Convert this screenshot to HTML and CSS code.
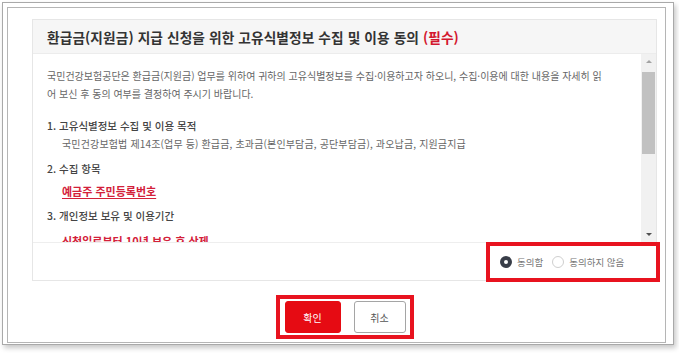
FILE: index.html
```html
<!DOCTYPE html>
<html lang="ko">
<head>
<meta charset="utf-8">
<link rel="stylesheet" href="styles.css">
</head>
<body>
<div class="outer">
  <div class="inner">
    <div class="panel">
      <div class="panel-head">
        <h2 class="title">환급금(지원금) 지급 신청을 위한 고유식별정보 수집 및 이용 동의 <span class="req">(필수)</span></h2>
      </div>
      <div class="scroll">
        <div class="scroll-text">
          <p class="intro">국민건강보험공단은 환급금(지원금) 업무를 위하여 귀하의 고유식별정보를 수집·이용하고자 하오니, 수집·이용에 대한 내용을 자세히 읽<br>어 보신 후 동의 여부를 결정하여 주시기 바랍니다.</p>
          <div class="sec sec1">1. 고유식별정보 수집 및 이용 목적</div>
          <div class="item">국민건강보험법 제14조(업무 등) 환급금, 초과금(본인부담금, 공단부담금), 과오납금, 지원금지급</div>
          <div class="sec sec2">2. 수집 항목</div>
          <div class="item red-item">예금주 주민등록번호</div>
          <div class="sec sec3">3. 개인정보 보유 및 이용기간</div>
          <div class="item red-item red-last">신청일로부터 10년 보유 후 삭제</div>
        </div>
        <div class="scrollbar">
          <div class="sb-btn"><span class="arrow-up"></span></div>
          <div class="sb-thumb"></div>
          <div class="sb-space"></div>
          <div class="sb-btn"><span class="arrow-down"></span></div>
        </div>
      </div>
      <div class="agree-row">
        <div class="agree-box">
          <label class="radio"><span class="dot checked"></span><span class="radio-label">동의함</span></label>
          <label class="radio"><span class="dot"></span><span class="radio-label">동의하지 않음</span></label>
        </div>
      </div>
    </div>
    <div class="btn-row">
      <div class="btn-box">
        <button class="btn btn-ok">확인</button>
        <button class="btn btn-cancel">취소</button>
      </div>
    </div>
  </div>
</div>
</body>
</html>
```

FILE: styles.css
```css
* { box-sizing: border-box; }
html, body { margin: 0; padding: 0; background: #ffffff; }
body {
  width: 679px;
  height: 356px;
  overflow: hidden;
  font-family: "Noto Sans CJK KR", "Noto Sans", sans-serif;
  color: #555;
}
.outer {
  margin: 2px 0 0 2px;
  width: 672px;
  height: 343px;
  border: 1px solid #a9a9a9;
  padding: 4px 7px 1px 4px;
  box-shadow: 2px 3px 5px rgba(0, 0, 0, 0.22);
  background: #fff;
}
.inner {
  height: 100%;
  border: 1px solid #b5b5b5;
  padding: 11px 8px 0 24px;
  display: flex;
  flex-direction: column;
}
.panel {
  border: 1px solid #e6e6e6;
  display: flex;
  flex-direction: column;
}
.panel-head {
  height: 34px;
  background: #f6f6f6;
  border-bottom: 1px solid #ececec;
  display: flex;
  align-items: center;
  padding-left: 14px;
}
.title {
  margin: 0;
  font-size: 13.7px;
  font-weight: 700;
  color: #333;
  letter-spacing: 0.1px;
}
.req { color: #d3182f; }
.scroll {
  height: 188px;
  display: flex;
}
.scroll-text {
  flex: 1;
  overflow: hidden;
  padding: 13px 10px 0 14px;
  font-size: 10px;
  line-height: 18px;
  color: #666;
}
.intro { margin: 0; }
.sec {
  color: #444;
  font-weight: 500;
  font-size: 10.5px;
}
.sec1 { margin-top: 14px; }
.sec2 { margin-top: 7px; }
.sec3 { margin-top: 7px; }
.item { padding-left: 15px; letter-spacing: 0.15px; }
.red-item {
  margin-top: 4px;
  color: #d3203a;
  font-weight: 700;
  font-size: 11px;
  letter-spacing: 0;
  text-decoration: underline;
  text-underline-offset: 2px;
}
.red-last { margin-top: 7px; text-decoration: none; }
.scrollbar {
  width: 15px;
  background: #f1f1f1;
  display: flex;
  flex-direction: column;
}
.sb-btn {
  height: 15px;
  display: flex;
  align-items: center;
  justify-content: center;
}
.arrow-up {
  width: 0; height: 0;
  border-left: 3px solid transparent;
  border-right: 3px solid transparent;
  border-bottom: 3px solid #a3a3a3;
}
.arrow-down {
  width: 0; height: 0;
  border-left: 3px solid transparent;
  border-right: 3px solid transparent;
  border-top: 3px solid #505050;
}
.sb-thumb {
  margin: 3px 1px 0 1px;
  height: 82px;
  background: #c1c1c1;
}
.sb-space { flex: 1; }
.agree-row {
  height: 38px;
  border-top: 1px solid #eeeeee;
  display: flex;
  justify-content: flex-end;
  align-items: center;
}
.agree-box {
  margin: -1px -4px -2px 0;
  width: 174px;
  height: 40px;
  border: 4px solid #e8131f;
  display: flex;
  align-items: center;
  padding-left: 10px;
  gap: 9px;
}
.radio {
  display: flex;
  align-items: center;
  gap: 5px;
  font-size: 9.5px;
  color: #777;
}
.dot {
  width: 12px;
  height: 12px;
  border-radius: 50%;
  border: 1px solid #cfcfcf;
  background: #fff;
}
.dot.checked {
  border: 4px solid #383d48;
}
.btn-row {
  margin-top: 14px;
  display: flex;
  justify-content: center;
  padding-right: 0;
}
.btn-box {
  width: 138px;
  height: 44px;
  border: 4px solid #e8131f;
  padding: 2px 4px 2px 5px;
  display: flex;
  gap: 13px;
}
.btn {
  height: 32px;
  border-radius: 3px;
  font-family: "Noto Sans CJK KR", "Noto Sans", sans-serif;
  font-size: 10px;
  cursor: pointer;
}
.btn-ok {
  width: 56px;
  background: #e60b13;
  border: 1px solid #e60b13;
  color: #fff;
}
.btn-cancel {
  width: 52px;
  background: #fff;
  border: 1px solid #a5a5a5;
  color: #555;
}
```
